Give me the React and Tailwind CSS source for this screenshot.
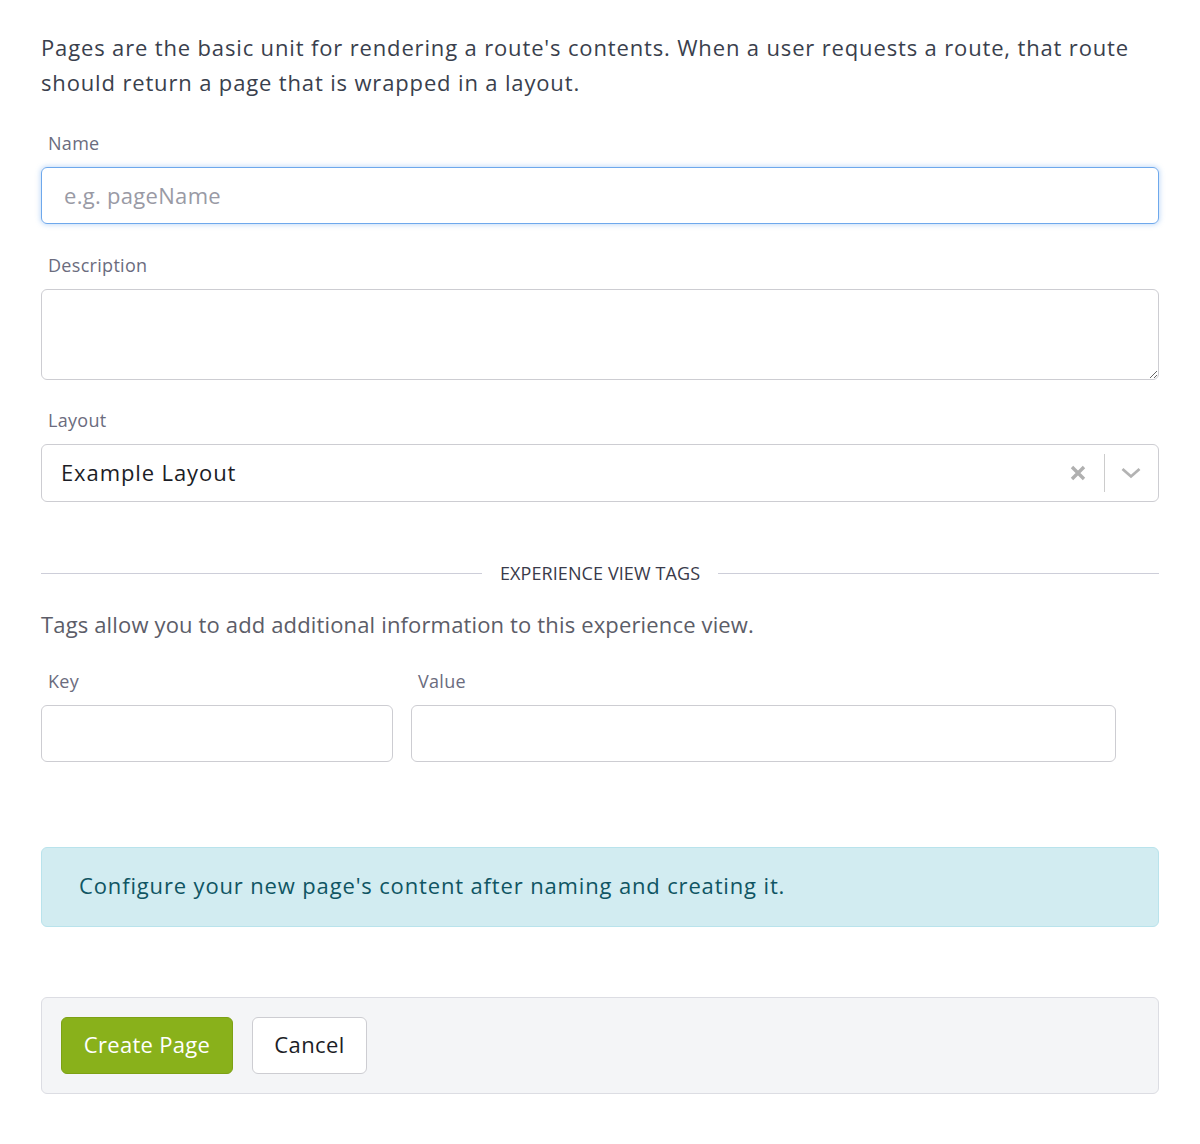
import React from "react";

const font = { fontFamily: '"Open Sans", "Noto Sans", sans-serif' };

function Label({ children }) {
  return (
    <div className="pl-[7px] text-[18px] leading-[24px] tracking-[0.3px] text-[#6b6c7e]">{children}</div>
  );
}

export default function App() {
  return (
    <div className="w-[1200px] min-h-[1144px] bg-white px-[41px] pt-[30px]" style={font}>
      <p className="text-[22px] leading-[35px] text-[#3a3f4d] tracking-[0.85px]">
        Pages are the basic unit for rendering a route's contents. When a user requests a route, that route should return a page that is wrapped in a layout.
      </p>

      <div className="mt-[31px]">
        <Label>Name</Label>
        <input
          className="mt-[12px] block h-[57px] w-full rounded-[6px] border-[1.5px] border-[#6ea8ec] px-[22px] pb-[2px] text-[22px] tracking-[0.3px] text-[#272833] placeholder-[#999aa5] shadow-[0_0_5px_1px_rgba(90,155,235,0.35)] outline-none"
          placeholder="e.g. pageName"
        />
      </div>

      <div className="mt-[29px]">
        <Label>Description</Label>
        <textarea className="mt-[12px] block h-[91px] w-full resize-y rounded-[6px] border-[1.5px] border-[#cdcdd2] px-[22px] outline-none" />
      </div>

      <div className="mt-[28px]">
        <Label>Layout</Label>
        <div className="mt-[12px] flex h-[58px] w-full items-center rounded-[6px] border-[1.5px] border-[#cdcdd2] pl-[19px] pr-[16px]">
          <span className="flex-1 pb-[2px] text-[22px] tracking-[0.9px] text-[#1c1d26]">Example Layout</span>
          <svg width="18" height="18" viewBox="0 0 18 18" className="mr-[17px]">
            <path d="M3 3 L15 15 M15 3 L3 15" stroke="#b0b0b0" strokeWidth="3.4" strokeLinecap="butt" />
          </svg>
          <div className="h-[38px] w-px bg-[#cccccc]" />
          <svg width="22" height="14" viewBox="0 0 22 14" className="ml-[15px]">
            <path d="M2.5 3 L11 10.5 L19.5 3" stroke="#b3b3b3" strokeWidth="2.8" fill="none" />
          </svg>
        </div>
      </div>

      <div className="mt-[59px] flex items-center">
        <div className="h-px flex-1 bg-[#cdced9]" />
        <span className="px-[18px] text-[18px] leading-[24px] uppercase tracking-[0.1px] text-[#393a4a]">Experience View Tags</span>
        <div className="h-px flex-1 bg-[#cdced9]" />
      </div>

      <p className="mt-[25px] text-[22px] leading-[28px] text-[#5c5d68] tracking-[0.15px]">
        Tags allow you to add additional information to this experience view.
      </p>

      <div className="mt-[31px] flex gap-[18px]">
        <div className="w-[352px]">
          <Label>Key</Label>
          <input className="mt-[12px] block h-[57px] w-full rounded-[6px] border-[1.5px] border-[#cdcdd2] px-[16px] outline-none" />
        </div>
        <div className="w-[705px]">
          <Label>Value</Label>
          <input className="mt-[12px] block h-[57px] w-full rounded-[6px] border-[1.5px] border-[#cdcdd2] px-[16px] outline-none" />
        </div>
      </div>

      <div className="mt-[85px] flex h-[80px] items-center rounded-[6px] border-[1.5px] border-[#b9e3ec] bg-[#d2ecf1] px-[37px] pb-[3px] text-[22px] font-medium text-[#0f5563] tracking-[0.85px]">
        Configure your new page's content after naming and creating it.
      </div>

      <div className="mt-[70px] flex h-[97px] items-center gap-[19px] rounded-[6px] border-[1.5px] border-[#dcdde3] bg-[#f4f5f7] px-[19px]">
        <button className="h-[57px] w-[172px] rounded-[6px] border-[1.5px] border-[#7da114] bg-[#89b11b] pb-[3px] text-[22px] font-medium tracking-[0.3px] text-white">
          Create Page
        </button>
        <button className="h-[57px] w-[115px] rounded-[6px] border-[1.5px] border-[#cdcdd2] bg-white pb-[3px] text-[22px] tracking-[0.4px] text-[#1c1d26]">
          Cancel
        </button>
      </div>
    </div>
  );
}
